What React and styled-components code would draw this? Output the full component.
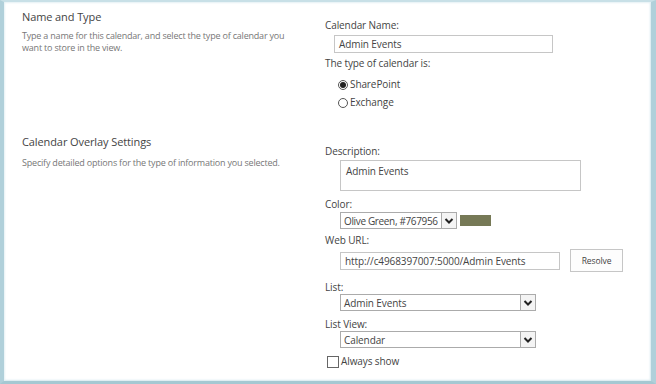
import styled, { createGlobalStyle } from "styled-components";

const Global = createGlobalStyle`
  html, body { margin: 0; padding: 0; background: #fff; }
  body {
    font-family: "Open Sans", "Noto Sans", sans-serif;
    color: #444;
    letter-spacing: -0.1px;
  }
`;

const Frame = styled.div`
  width: 656px;
  height: 384px;
  box-sizing: border-box;
  background: #fff;
  border-style: solid;
  border-width: 2px 5px 3px 4px;
  border-color: #c8e0e7 #b0d0da #a5c8d2 #b0d0da;
  box-shadow: inset 1px 1px 2px #e4f0f4, inset -1px -1px 2px #d6e8ee;
  display: flex;
  flex-direction: column;
  overflow: hidden;
`;

const Section = styled.section`
  display: grid;
  grid-template-columns: 321px 1fr;
  padding-top: ${({ top }) => top}px;
`;

const Info = styled.div`
  padding-left: 18px;
`;

const Title = styled.div`
  font-size: 11px;
  line-height: 14px;
  color: #444;
`;

const Desc = styled.div`
  margin-top: ${({ gap }) => gap}px;
  font-size: 9px;
  line-height: 11.5px;
  letter-spacing: -0.2px;
  color: #777;
  width: 275px;
`;

const Fields = styled.div`
  display: flex;
  flex-direction: column;
  align-items: flex-start;
`;

const Label = styled.div`
  font-size: 10px;
  line-height: 13px;
  color: #444;
  margin-top: ${({ gap }) => gap || 0}px;
`;

const TextBox = styled.div`
  box-sizing: border-box;
  width: ${({ w }) => w}px;
  height: ${({ h }) => h || 18}px;
  margin-top: ${({ gap }) => gap || 0}px;
  margin-left: ${({ indent }) => indent || 0}px;
  border: 1px solid #c6c6c6;
  padding: ${({ multi }) => (multi ? "3px 5px" : "0 4px")};
  display: flex;
  align-items: ${({ multi }) => (multi ? "flex-start" : "center")};
  font-size: 10px;
  color: #444;
  white-space: nowrap;
`;

const Row = styled.div`
  display: flex;
  align-items: center;
  margin-top: ${({ gap }) => gap || 0}px;
  margin-left: ${({ indent }) => indent || 0}px;
`;

const Select = styled.div`
  box-sizing: border-box;
  width: ${({ w }) => w}px;
  height: 17px;
  border: 1px solid #ababab;
  display: flex;
  align-items: center;
  justify-content: space-between;
  padding-left: 3px;
  font-size: 10px;
  color: #444;
  white-space: nowrap;
  overflow: hidden;
`;

const SelectText = styled.span`
  letter-spacing: ${({ tight }) => (tight ? "-0.35px" : "-0.1px")};
`;

const Arrow = styled.span`
  flex: none;
  box-sizing: border-box;
  width: 15px;
  height: 15px;
  border-left: 1px solid #ababab;
  background: #f4f4f4;
  display: flex;
  align-items: center;
  justify-content: center;
`;

const Swatch = styled.span`
  width: 31px;
  height: 11px;
  margin-left: 3px;
  background: #767956;
`;

const Button = styled.div`
  box-sizing: border-box;
  width: 53px;
  height: 23px;
  margin-left: 10px;
  border: 1px solid #c6c6c6;
  background: #fdfdfd;
  display: flex;
  align-items: center;
  justify-content: center;
  font-size: 8.5px;
  color: #444;
`;

const Radio = styled.span`
  box-sizing: border-box;
  width: 10px;
  height: 10px;
  border-radius: 50%;
  border: 1px solid #555;
  display: flex;
  align-items: center;
  justify-content: center;
  margin-right: 2px;

  &::after {
    content: "";
    width: 6px;
    height: 6px;
    border-radius: 50%;
    background: ${({ on }) => (on ? "#222" : "transparent")};
  }
`;

const Check = styled.span`
  box-sizing: border-box;
  width: 12px;
  height: 12px;
  border: 1px solid #666;
  background: #fff;
  margin-right: 2px;
`;

const OptionText = styled.span`
  font-size: 10px;
  line-height: 13px;
  color: #444;
`;

const Chevron = () => (
  <svg width="10" height="8" viewBox="0 0 10 8">
    <path d="M1.5 2 L5 5.5 L8.5 2" fill="none" stroke="#222" strokeWidth="2" />
  </svg>
);

const Dropdown = ({ w, tight, children }) => (
  <Select w={w}>
    <SelectText tight={tight}>{children}</SelectText>
    <Arrow>
      <Chevron />
    </Arrow>
  </Select>
);

export default function App() {
  return (
    <>
      <Global />
      <Frame>
        <Section top={8}>
          <Info>
            <Title>Name and Type</Title>
            <Desc gap={6}>
              Type a name for this calendar, and select the type of calendar you
              want to store in the view.
            </Desc>
          </Info>
          <Fields>
            <Label gap={9}>Calendar Name:</Label>
            <TextBox w={219} gap={3} indent={9}>Admin Events</TextBox>
            <Label gap={4}>The type of calendar is:</Label>
            <Row gap={8} indent={13}>
              <Radio on />
              <OptionText>SharePoint</OptionText>
            </Row>
            <Row gap={5} indent={13}>
              <Radio />
              <OptionText>Exchange</OptionText>
            </Row>
          </Fields>
        </Section>
        <Section top={26}>
          <Info>
            <Title>Calendar Overlay Settings</Title>
            <Desc gap={8}>
              Specify detailed options for the type of information you selected.
            </Desc>
          </Info>
          <Fields>
            <Label gap={10}>Description:</Label>
            <TextBox w={241} h={31} gap={2} indent={15} multi>
              Admin Events
            </TextBox>
            <Label gap={7}>Color:</Label>
            <Row gap={1} indent={15}>
              <Dropdown w={117} tight>
                Olive Green, #767956
              </Dropdown>
              <Swatch />
            </Row>
            <Label gap={5}>Web URL:</Label>
            <Row gap={2} indent={15}>
              <TextBox w={220}>http://c4968397007:5000/Admin Events</TextBox>
              <Button>Resolve</Button>
            </Row>
            <Label gap={9}>List:</Label>
            <Row indent={15}>
              <Dropdown w={196}>Admin Events</Dropdown>
            </Row>
            <Label gap={7}>List View:</Label>
            <Row indent={15}>
              <Dropdown w={196}>Calendar</Dropdown>
            </Row>
            <Row gap={7} indent={2}>
              <Check />
              <OptionText>Always show</OptionText>
            </Row>
          </Fields>
        </Section>
      </Frame>
    </>
  );
}
